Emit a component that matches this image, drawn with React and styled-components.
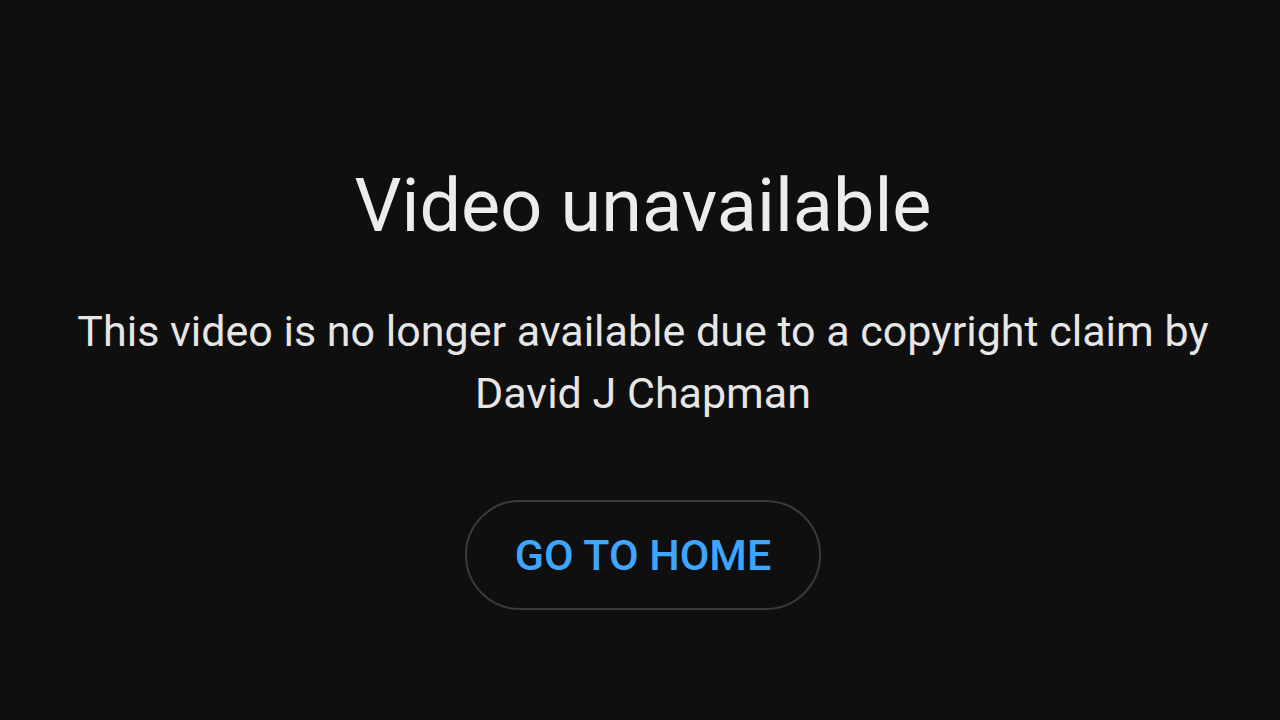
import React from "react";
import styled, { createGlobalStyle } from "styled-components";

const Global = createGlobalStyle`
  html, body { margin: 0; padding: 0; background: #0f0f0f; }
  body { font-family: Roboto, "Noto Sans", Arial, sans-serif; }
`;

const Page = styled.div`
  width: 1280px;
  height: 720px;
  background: #0f0f0f;
  display: flex;
  flex-direction: column;
  align-items: center;
  box-sizing: border-box;
  padding: 162px 0 0 6px;
`;

const Title = styled.h1`
  margin: 0;
  font-size: 73.8px;
  line-height: 88px;
  font-weight: 400;
  color: #ececec;
`;

const Message = styled.p`
  margin: 50px 0 0;
  font-size: 43px;
  line-height: 62px;
  font-weight: 400;
  color: #e6e6e6;
  text-align: center;
  max-width: 1180px;
`;

const HomeButton = styled.button`
  margin-top: 76px;
  width: 356px;
  height: 110px;
  border-radius: 55px;
  border: 2px solid #3a3a3a;
  background: transparent;
  color: #3ea6ff;
  font-family: Roboto, sans-serif;
  font-size: 43px;
  font-weight: 500;
  letter-spacing: 0;
  cursor: pointer;
  box-sizing: border-box;
`;

export default function App() {
  return (
    <>
      <Global />
      <Page>
        <Title>Video unavailable</Title>
        <Message>
          This video is no longer available due to a copyright claim by David J Chapman
        </Message>
        <HomeButton>GO TO HOME</HomeButton>
      </Page>
    </>
  );
}
